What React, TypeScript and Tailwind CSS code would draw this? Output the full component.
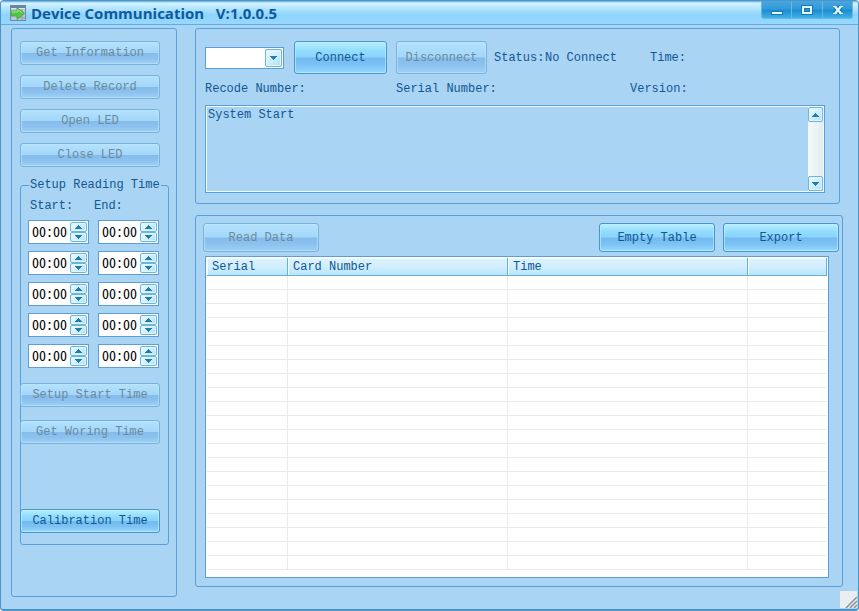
import React from 'react';

const enabledButton =
  'border-[#4a95cb] bg-[linear-gradient(180deg,#b9f0ff_0%,#92dcfd_28%,#8ad4fc_48%,#72baf0_52%,#7cc2f3_75%,#96daff_100%)] text-[#135791] shadow-[inset_0_0_0_1px_rgba(190,240,255,0.65)]';
const disabledButton =
  'border-[#78b3dd] bg-[linear-gradient(180deg,#b4e2fc_0%,#a3d6f9_48%,#86bcec_52%,#8cc2ef_75%,#9fd1f5_100%)] text-[#6d8b9a] shadow-[inset_0_0_0_1px_rgba(190,230,250,0.6)]';

const SkinButton: React.FC<{
  label: string;
  size: string;
  disabled?: boolean;
}> = ({ label, size, disabled = false }) => (
  <button
    type="button"
    disabled={disabled}
    className={`shrink-0 rounded-[3px] border text-center ${size} ${disabled ? disabledButton : enabledButton}`}
  >
    {label}
  </button>
);

const Arrow: React.FC<{ up?: boolean }> = ({ up = false }) => (
  <svg width="7" height="4" viewBox="0 0 7 4" fill="#237fa8" shapeRendering="crispEdges" aria-hidden="true">
    {up ? <path d="M3 0h1v1h1v1h1v1h1v1H0V3h1V2h1V1h1z" /> : <path d="M0 0h7v1H6v1H5v1H4v1H3V3H2V2H1V1H0z" />}
  </svg>
);

const arrowButton =
  'flex items-center justify-center rounded-[2px] border border-[#6fb5d6] bg-[linear-gradient(135deg,#f0fcff,#aee0f6)] shadow-[inset_0_0_0_1px_#dff6ff]';

const TimeSpinner: React.FC<{ label: string }> = ({ label }) => (
  <div className="flex h-6 w-[61px] border border-[#5b9fd6] bg-white">
    <input
      type="text"
      defaultValue="00:00"
      aria-label={label}
      className="h-5 min-w-0 flex-1 bg-transparent pl-[3px] font-['Noto_Sans_CJK_SC',sans-serif] text-[14px] leading-5 text-black outline-none [font-feature-settings:'hwid']"
    />
    <div className="flex w-[18px] flex-col p-px pl-0">
      <button type="button" aria-label={`${label} up`} className={`flex-1 ${arrowButton}`}>
        <Arrow up />
      </button>
      <button type="button" aria-label={`${label} down`} className={`flex-1 ${arrowButton}`}>
        <Arrow />
      </button>
    </div>
  </div>
);

const TitleBar = () => (
  <header className="flex h-6 shrink-0 items-start justify-between rounded-t-[4px] border-b border-[#62aee0] bg-[linear-gradient(180deg,#5ba9dc_0px,#d5f3ff_2px,#b4e6ff_7px,#8fd3fc_14px,#98d9ff_24px)] pr-[5px] pl-[9px]">
    <div className="flex h-6 items-center">
      <svg width="16" height="16" viewBox="0 0 16 16" aria-hidden="true">
        <rect x="0.5" y="0.5" width="15" height="15" fill="#b9c8d6" stroke="#6f88a3" />
        <path d="M1 1h14v2H1z" fill="#6b83a3" />
        <path d="M1 3h14v1H1z" fill="#dbe6ef" />
        <path d="M10 13h5M12 4v11" stroke="#8d9db0" />
        <path d="M1 6h6V2.500L14.500 8.500 7 14.500V11H1z" fill="#4fc93f" stroke="#47a046" strokeWidth="0.8" />
        <path d="M1.500 7h6.300V4.500L12 8" stroke="#9fe98a" fill="none" />
      </svg>
      <h1 className="ml-[5px] font-['Open_Sans',sans-serif] text-[15px] leading-6 font-bold whitespace-pre text-[#0d5a9d]">
        Device Communication{'   '}V:1.0.0.5
      </h1>
    </div>
    <div className="flex h-[18px] divide-x divide-[#65b9e7] rounded-b-[3px] border border-t-0 border-[#65b9e7] bg-[linear-gradient(180deg,#4ba5dd,#309cda_45%,#1e8dcf_55%,#42b0e8)]">
      <button type="button" aria-label="Minimize" className="flex w-[30px] items-center justify-center">
        <svg width="12" height="12" viewBox="0 0 12 12" aria-hidden="true">
          <path d="M0 7h12v4H0z" fill="#1878b0" />
          <path d="M1 8h10v2H1z" fill="#e2fbff" />
        </svg>
      </button>
      <button type="button" aria-label="Maximize" className="flex w-[31px] items-center justify-center">
        <svg width="12" height="12" viewBox="0 0 12 12" fill="none" aria-hidden="true">
          <path d="M2 3h8v6H2z" stroke="#1878b0" strokeWidth="4" />
          <path d="M2 3h8v6H2z" stroke="#e2fbff" strokeWidth="2" />
        </svg>
      </button>
      <button type="button" aria-label="Close" className="flex w-[29px] items-center justify-center">
        <svg width="12" height="12" viewBox="0 0 12 12" fill="none" aria-hidden="true">
          <path d="M3 2.500l6 7M9 2.500l-6 7" stroke="#1878b0" strokeWidth="4.500" />
          <path d="M3 2.500l6 7M9 2.500l-6 7" stroke="#e2fbff" strokeWidth="2.200" />
          <path d="M1 2.500h3.500M7.500 2.500h3.500M1 9.500h3.500M7.500 9.500h3.500" stroke="#e2fbff" strokeWidth="1.200" />
        </svg>
      </button>
    </div>
  </header>
);

const slots = [1, 2, 3, 4, 5];
const wide = 'h-6 w-[140px]';

const Sidebar = () => (
  <aside className="flex w-[166px] shrink-0 flex-col rounded-[3px] border border-[#5b9fd8] pt-3 pb-[51px] pl-2">
    <div className="flex flex-col gap-[10px]">
      <SkinButton label="Get Information" size={wide} disabled />
      <SkinButton label="Delete Record" size={wide} disabled />
      <SkinButton label="Open LED" size={wide} disabled />
      <SkinButton label="Close LED" size={wide} disabled />
    </div>

    <fieldset className="mt-[10px] w-[149px] rounded-[3px] border border-[#5b9fd8] pb-[11px]">
      <legend className="ml-2 px-px leading-4">Setup Reading Time</legend>
      <div className="grid grid-cols-[61px_61px] gap-x-[9px] pl-[7px]">
        <span className="mt-[5px] pl-[2px] leading-4">Start:</span>
        <span className="mt-[5px] -ml-1 leading-4">End:</span>
      </div>
      <div className="mt-[6px] grid grid-cols-[61px_61px] gap-x-[9px] gap-y-[7px] pl-[7px]">
        {slots.map((slot) => (
          <React.Fragment key={slot}>
            <TimeSpinner label={`Start ${slot}`} />
            <TimeSpinner label={`End ${slot}`} />
          </React.Fragment>
        ))}
      </div>
      {/* Les boutons recouvrent la bordure gauche du cadre */}
      <div className="mt-[15px] -ml-px flex flex-col gap-[13px]">
        <SkinButton label="Setup Start Time" size={wide} disabled />
        <SkinButton label="Get Woring Time" size={wide} disabled />
      </div>
      <div className="mt-[65px] -ml-px flex">
        <SkinButton label="Calibration Time" size={wide} />
      </div>
    </fieldset>
  </aside>
);

const ConnectionPanel = () => (
  <section className="mr-[3px] rounded-[3px] border border-[#5b9fd8] pt-3 pr-[14px] pb-[10px] pl-[9px]">
    <div className="flex h-[33px] items-center">
      <div className="relative mr-[10px] w-[79px] shrink-0">
        <select
          aria-label="Port"
          className="block h-[22px] w-full appearance-none border border-[#5b9fd6] bg-white pl-1 outline-none"
        >
          <option value=""></option>
        </select>
        <span className={`pointer-events-none absolute top-[2px] right-[2px] h-[18px] w-[17px] ${arrowButton}`}>
          <Arrow />
        </span>
      </div>
      <SkinButton label="Connect" size="h-[33px] w-[93px]" />
      <div className="ml-[9px] flex">
        <SkinButton label="Disconnect" size="h-[33px] w-[91px]" disabled />
      </div>
      <span className="ml-[7px] w-[51px] leading-4">Status:</span>
      <output className="w-[105px] leading-4">No Connect</output>
      <span className="leading-4">Time:</span>
    </div>
    <div className="mt-[7px] grid grid-cols-[191px_234px_1fr] leading-4">
      <span>Recode Number:</span>
      <span>Serial Number:</span>
      <span>Version:</span>
    </div>
    <div className="mt-2 flex h-[88px] border border-[#5b9fd6] shadow-[inset_0_0_0_1px_#eefaff]">
      <textarea
        aria-label="Log"
        readOnly
        defaultValue="System Start"
        className="min-w-0 flex-1 resize-none overflow-hidden bg-transparent px-[2px] pt-px leading-4 outline-none"
      />
      <div className="m-px flex w-[15px] flex-col justify-between bg-[linear-gradient(90deg,#f4fafb,#e2edef)]">
        <button type="button" aria-label="Scroll up" className={`h-[15px] w-[15px] ${arrowButton}`}>
          <Arrow up />
        </button>
        <button type="button" aria-label="Scroll down" className={`h-[15px] w-[15px] ${arrowButton}`}>
          <Arrow />
        </button>
      </div>
    </div>
  </section>
);

const columns = ['Serial', 'Card Number', 'Time', ''];
const rows = Array.from({ length: 21 }, (_, i) => i);

const RecordsPanel = () => (
  <section className="flex flex-1 flex-col rounded-[3px] border border-[#5b9fd8] pt-[7px] pr-[3px] pb-2 pl-[7px]">
    <div className="flex gap-2">
      <SkinButton label="Read Data" size="h-[29px] w-[116px] mr-auto" disabled />
      <SkinButton label="Empty Table" size="h-[29px] w-[116px]" />
      <SkinButton label="Export" size="h-[29px] w-[116px]" />
    </div>
    <div className="mt-1 mr-[10px] ml-[2px] flex-1 border border-[#5b9fd6] bg-white p-px">
      <table className="w-full table-fixed border-separate border-spacing-0">
        <colgroup>
          <col className="w-[81px]" />
          <col className="w-[220px]" />
          <col className="w-[240px]" />
          <col />
        </colgroup>
        <thead>
          <tr>
            {columns.map((name) => (
              <th
                key={name}
                className="h-[18px] border-r border-b border-[#64b2d8] bg-[linear-gradient(180deg,#dff2ff,#d0efff_50%,#b9e5fc)] p-0 pl-[5px] text-left leading-4 font-normal shadow-[inset_1px_1px_0_#f5fdff]"
              >
                {name}
              </th>
            ))}
          </tr>
        </thead>
        <tbody>
          {rows.map((row) => (
            <tr key={row}>
              {columns.map((name) => (
                <td key={name} className="h-[14px] border-r border-b border-[#e8eaec] p-0 last:border-r-0" />
              ))}
            </tr>
          ))}
        </tbody>
      </table>
    </div>
  </section>
);

const App = () => (
  <div className="relative flex min-h-screen flex-col rounded-[4px] border border-b-2 border-[#4a94c8] bg-[#a9d4f4] font-['Liberation_Mono',monospace] text-[12px] text-[#125692]">
    <TitleBar />
    <main className="flex flex-1 pt-[3px] pr-[15px] pb-3 pl-[10px]">
      <Sidebar />
      <div className="mb-[10px] ml-[18px] flex min-w-0 flex-1 flex-col gap-[11px]">
        <ConnectionPanel />
        <RecordsPanel />
      </div>
    </main>
    <svg
      className="absolute right-px bottom-px"
      width="17"
      height="17"
      viewBox="0 0 17 17"
      stroke="#8c8f94"
      strokeWidth="1.500"
      aria-hidden="true"
    >
      <path d="M0 0h17v17H0z" fill="#ebeef0" stroke="none" />
      <path d="M6 17L17 6M10 17l7-7M14 17l3-3" />
    </svg>
  </div>
);

export default App;
